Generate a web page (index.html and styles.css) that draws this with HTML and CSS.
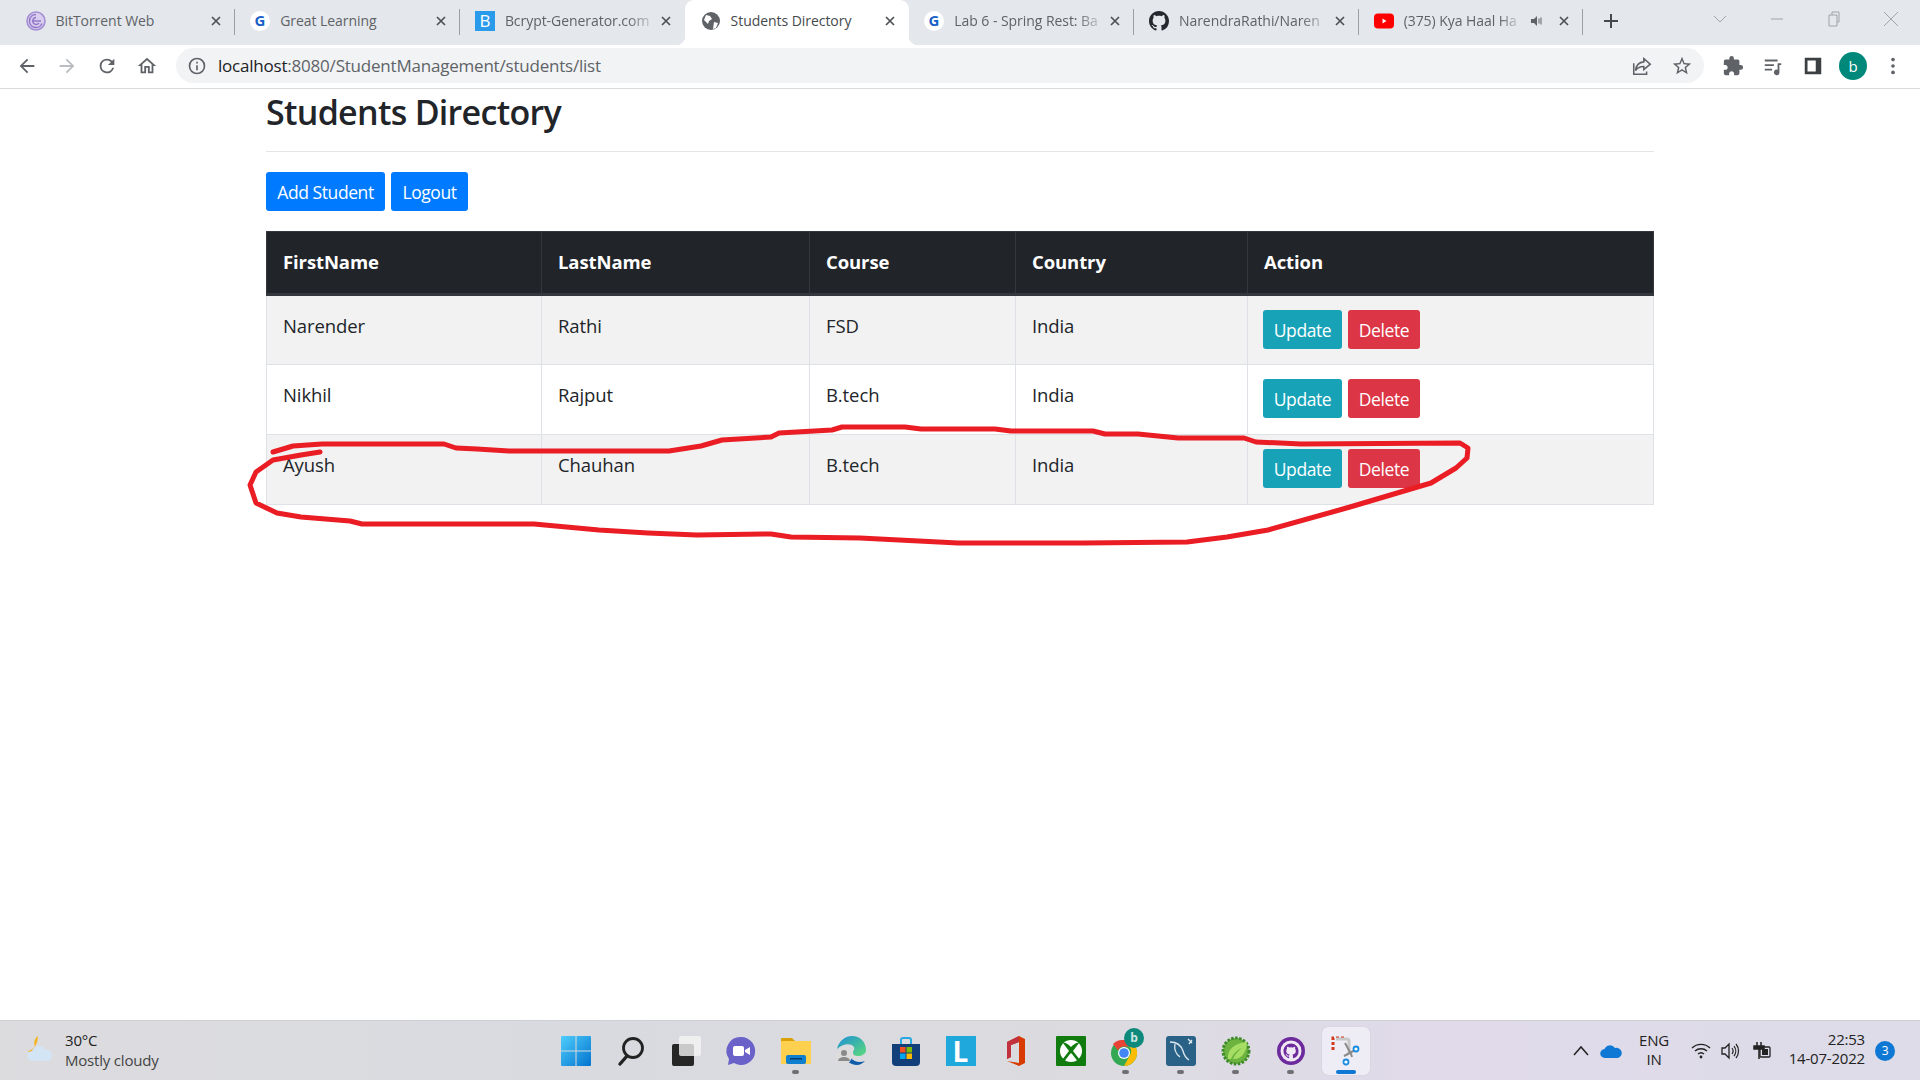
FILE: index.html
```html
<!DOCTYPE html>
<html lang="en">
<head>
<meta charset="utf-8">
<title>Students Directory</title>
<link rel="stylesheet" href="styles.css">
</head>
<body>
<div class="tabstrip">
  <div class="tab sep">
    <svg class="fav" viewBox="0 0 20 20"><circle cx="10" cy="10" r="9" fill="#d9cdf0" stroke="#a58fd4" stroke-width="1.6"/><path d="M10 3.5a6.5 6.5 0 1 0 6 9M10 6.5a3.5 3.5 0 1 0 3 5.5" fill="none" stroke="#9478c8" stroke-width="1.5"/><path d="M7 10h8" stroke="#9478c8" stroke-width="1.5"/></svg>
    <span class="title">BitTorrent Web</span>
    <svg class="close" viewBox="0 0 16 16"><path d="M4 4l8 8M12 4l-8 8"/></svg>
  </div>
  <div class="tab sep">
    <svg class="fav" viewBox="0 0 20 20"><circle cx="10" cy="10" r="10" fill="#fff"/><text x="10" y="15" class="fav-g">G</text></svg>
    <span class="title">Great Learning</span>
    <svg class="close" viewBox="0 0 16 16"><path d="M4 4l8 8M12 4l-8 8"/></svg>
  </div>
  <div class="tab">
    <svg class="fav" viewBox="0 0 20 20"><rect width="20" height="20" fill="#2a9bea"/><text x="10" y="16" class="fav-b">B</text></svg>
    <span class="title fade">Bcrypt-Generator.com</span>
    <svg class="close" viewBox="0 0 16 16"><path d="M4 4l8 8M12 4l-8 8"/></svg>
  </div>
  <div class="tab active">
    <svg class="fav" viewBox="0 0 20 20"><circle cx="10" cy="10" r="9" fill="#5f6368"/><path d="M5 4l4 1 2 3-3 2-1 3-4-4zM13 11l4 1-2 5-3 1z" fill="#fff"/></svg>
    <span class="title">Students Directory</span>
    <svg class="close" viewBox="0 0 16 16"><path d="M4 4l8 8M12 4l-8 8"/></svg>
  </div>
  <div class="tab sep">
    <svg class="fav" viewBox="0 0 20 20"><circle cx="10" cy="10" r="10" fill="#fff"/><text x="10" y="15" class="fav-g">G</text></svg>
    <span class="title fade">Lab 6 - Spring Rest: Ba</span>
    <svg class="close" viewBox="0 0 16 16"><path d="M4 4l8 8M12 4l-8 8"/></svg>
  </div>
  <div class="tab sep">
    <svg class="fav" viewBox="0 0 16 16"><path fill="#24292f" d="M8 0C3.58 0 0 3.58 0 8c0 3.54 2.29 6.53 5.47 7.59.4.07.55-.17.55-.38 0-.19-.01-.82-.01-1.49-2.01.37-2.53-.49-2.69-.94-.09-.23-.48-.94-.82-1.13-.28-.15-.68-.52-.01-.53.63-.01 1.08.58 1.23.82.72 1.21 1.87.87 2.33.66.07-.52.28-.87.51-1.07-1.78-.2-3.64-.89-3.64-3.95 0-.87.31-1.59.82-2.15-.08-.2-.36-1.02.08-2.12 0 0 .67-.21 2.2.82.64-.18 1.32-.27 2-.27.68 0 1.36.09 2 .27 1.53-1.04 2.2-.82 2.2-.82.44 1.1.16 1.92.08 2.12.51.56.82 1.27.82 2.15 0 3.07-1.87 3.75-3.65 3.95.29.25.54.73.54 1.48 0 1.07-.01 1.93-.01 2.2 0 .21.15.46.55.38A8.013 8.013 0 0 0 16 8c0-4.42-3.58-8-8-8z"/></svg>
    <span class="title fade">NarendraRathi/Naren</span>
    <svg class="close" viewBox="0 0 16 16"><path d="M4 4l8 8M12 4l-8 8"/></svg>
  </div>
  <div class="tab sep">
    <svg class="fav" viewBox="0 0 20 20"><rect y="2.5" width="20" height="15" rx="4" fill="#f00"/><path d="M8.5 7.5v5l4-2.5z" fill="#fff"/></svg>
    <span class="title fade">(375) Kya Haal Ha</span>
    <svg class="speaker" viewBox="0 0 16 16"><path d="M2 6h3l3-3v10l-3-3H2z" fill="#5f6368"/><path d="M10 5.5v5M12 4.500v7" stroke="#5f6368" fill="none"/></svg>
    <svg class="close" viewBox="0 0 16 16"><path d="M4 4l8 8M12 4l-8 8"/></svg>
  </div>
  <svg class="newtab" viewBox="0 0 16 16"><path d="M8 1v14M1 8h14"/></svg>
  <div class="winctl">
    <svg class="chev" viewBox="0 0 16 16"><path d="M2 5l6 6 6-6"/></svg>
    <svg class="wbtn" viewBox="0 0 16 16"><path d="M2 8h12"/></svg>
    <svg class="wbtn" viewBox="0 0 16 16"><path d="M3 4h8v11H3zM6 4V1h7v10h-2"/></svg>
    <svg class="wbtn" viewBox="0 0 16 16"><path d="M1 1l14 14M15 1L1 15"/></svg>
  </div>
</div>

<div class="toolbar">
  <div class="nav"><svg class="ic" viewBox="0 0 24 24"><path d="M20 11H7.830l5.590-5.590L12 4l-8 8 8 8 1.410-1.410L7.830 13H20v-2z"/></svg></div>
  <div class="nav"><svg class="ic dim" viewBox="0 0 24 24"><path d="M4 11h12.170l-5.590-5.590L12 4l8 8-8 8-1.410-1.410L16.170 13H4v-2z"/></svg></div>
  <div class="nav"><svg class="ic" viewBox="0 0 24 24"><path d="M17.650 6.350A7.960 7.960 0 0 0 12 4a8 8 0 1 0 7.730 10h-2.080A6 6 0 1 1 12 6c1.660 0 3.140.690 4.220 1.780L13 11h7V4l-2.350 2.350z"/></svg></div>
  <div class="nav"><svg class="ic" viewBox="0 0 24 24"><path d="M12 5.690l5 4.500V18h-2v-6H9v6H7v-7.810l5-4.500M12 3L2 12h3v8h6v-6h2v6h6v-8h3L12 3z"/></svg></div>
  <div class="omni">
    <svg class="ic small" viewBox="0 0 24 24"><path d="M11 7h2v2h-2zm0 4h2v6h-2zm1-9a10 10 0 1 0 0 20 10 10 0 0 0 0-20zm0 18a8 8 0 1 1 0-16 8 8 0 0 1 0 16z"/></svg>
    <span class="url">localhost<span class="url-rest">:8080/StudentManagement/students/list</span></span>
    <svg class="ic omni-share" viewBox="0 0 24 24"><path d="M14 4l7 6-7 6v-3.500c-4 0-7 1-9 4.500 .5-5 3-9 9-9.500zM3 9v12h14v-3" fill="none" stroke="#5f6368" stroke-width="1.700"/></svg>
    <svg class="ic omni-star" viewBox="0 0 24 24"><path d="M22 9.240l-7.190-.620L12 2 9.190 8.630 2 9.240l5.460 4.730L5.820 21 12 17.270 18.180 21l-1.630-7.030L22 9.240zM12 15.400l-3.760 2.270 1-4.280-3.320-2.880 4.380-.380L12 6.100l1.710 4.040 4.380.380-3.320 2.880 1 4.280L12 15.400z"/></svg>
  </div>
  <div class="exts">
    <div class="nav"><svg class="ic" viewBox="0 0 24 24"><path d="M20.500 11H19V7c0-1.100-.900-2-2-2h-4V3.500a2.500 2.500 0 0 0-5 0V5H4c-1.100 0-1.990.900-1.990 2v3.800H3.500c1.490 0 2.700 1.210 2.700 2.700s-1.210 2.700-2.700 2.700H2V20c0 1.100.900 2 2 2h3.800v-1.500c0-1.490 1.210-2.700 2.700-2.700 1.490 0 2.700 1.210 2.700 2.700V22H17c1.100 0 2-.900 2-2v-4h1.500a2.500 2.500 0 0 0 0-5z"/></svg></div>
    <div class="nav"><svg class="ic" viewBox="0 0 24 24"><path d="M3 5h14v2H3zM3 10h10v2H3zM3 15h8v2H3zM17 9h4v2h-2v8a3 3 0 1 1-2-2.800z"/></svg></div>
    <div class="nav"><svg class="ic panel" viewBox="0 0 24 24"><path fill-rule="evenodd" d="M3 3h18v18H3zM6 6v12h9V6z"/></svg></div>
    <div class="nav"><span class="avatar">b</span></div>
    <div class="nav"><svg class="ic" viewBox="0 0 24 24"><circle cx="12" cy="5" r="2"/><circle cx="12" cy="12" r="2"/><circle cx="12" cy="19" r="2"/></svg></div>
  </div>
</div>

<main class="page">
  <h1 class="heading">Students Directory</h1>
  <hr class="rule">
  <div class="actions">
    <a class="btn btn-add">Add Student</a>
    <a class="btn btn-logout">Logout</a>
  </div>
  <table class="students">
    <thead>
      <tr>
        <th class="c1">FirstName</th>
        <th class="c2">LastName</th>
        <th class="c3">Course</th>
        <th class="c4">Country</th>
        <th class="c5">Action</th>
      </tr>
    </thead>
    <tbody>
      <tr class="odd">
        <td>Narender</td><td>Rathi</td><td>FSD</td><td>India</td>
        <td class="cell-actions"><div class="row-actions"><a class="btn btn-update">Update</a><a class="btn btn-delete">Delete</a></div></td>
      </tr>
      <tr>
        <td>Nikhil</td><td>Rajput</td><td>B.tech</td><td>India</td>
        <td class="cell-actions"><div class="row-actions"><a class="btn btn-update">Update</a><a class="btn btn-delete">Delete</a></div></td>
      </tr>
      <tr class="odd">
        <td>Ayush</td><td>Chauhan</td><td>B.tech</td><td>India</td>
        <td class="cell-actions"><div class="row-actions"><a class="btn btn-update">Update</a><a class="btn btn-delete">Delete</a></div></td>
      </tr>
    </tbody>
  </table>
</main>

<svg class="scribble" viewBox="0 0 1920 1080" aria-hidden="true"><path d="M273 452L293 446 322 444 444 444 456 448 477 449 509 451 669 451 701 446 722 440 771 437 779 433 832 430 842 427 905 427 921 429 995 429 1011 431 1093 431 1105 434 1138 434 1178 438 1244 438 1256 442 1301 444 1460 443 1468 448 1467 458 1456 468 1431 483 1350 507 1268 530 1227 537 1187 542 1084 543 958 543 860 538 791 537 771 534 697 535 648 533 599 530 534 524 362 524 350 521 301 517 277 513 256 503 250 485 256 472 273 460 301 455 320 452"/></svg>

<footer class="taskbar">
  <div class="weather">
    <svg class="wx" viewBox="0 0 32 32"><path d="M14 2a9 9 0 0 0 3 16 9 9 0 0 1-13-1c5-1 10-6 10-15z" fill="#f5b324"/><path d="M9 27a5 5 0 0 1-1-10 7 7 0 0 1 13-1 5.500 5.500 0 0 1 3 11z" fill="#d3e4f5"/></svg>
    <div class="wx-text"><span>30°C</span><span class="wx-sub">Mostly cloudy</span></div>
  </div>
  <div class="apps">
    <div class="app"><svg class="ai" viewBox="0 0 30 30"><defs><linearGradient id="win" x1="0" y1="0" x2="1" y2="1"><stop offset="0" stop-color="#4fcdfb"/><stop offset="1" stop-color="#0273cf"/></linearGradient></defs><path fill="url(#win)" d="M0 1a1 1 0 0 1 1-1h13.500v14.500H0zM15.500 0H29a1 1 0 0 1 1 1v13.500H15.500zM0 15.500h14.500V30H1a1 1 0 0 1-1-1zM15.500 15.500H30V29a1 1 0 0 1-1 1H15.500z"/></svg></div>
    <div class="app"><svg class="ai" viewBox="0 0 30 30"><circle cx="17" cy="12" r="9.500" fill="none" stroke="#222" stroke-width="2.800"/><path d="M11 20l-7 8" stroke="#222" stroke-width="3.400" stroke-linecap="round"/></svg></div>
    <div class="app"><svg class="ai" viewBox="0 0 30 30"><rect x="1" y="8" width="22" height="22" rx="2" fill="#262626"/><rect x="8" y="0" width="22" height="20" rx="2" fill="#f4f4f4" opacity=".8"/></svg></div>
    <div class="app"><svg class="ai" viewBox="0 0 30 30"><path d="M15 1a14 14 0 1 1-7 26l-6 2 1-6A14 14 0 0 1 15 1z" fill="#6a62c8"/><rect x="7" y="10" width="11" height="10" rx="2" fill="#fff"/><path d="M19 14l5-3v8l-5-3z" fill="#fff"/></svg></div>
    <div class="app with-dot"><svg class="ai" viewBox="0 0 30 30"><path d="M0 3a1 1 0 0 1 1-1h10l3 3v6H0z" fill="#d9a007"/><rect y="5" width="30" height="23" rx="1" fill="#fdd04f"/><rect x="5" y="19" width="20" height="9" rx="2" fill="#0f7fd0"/><rect x="9" y="22" width="12" height="1.500" fill="#053c6e"/></svg></div>
    <div class="app"><svg class="ai" viewBox="0 0 30 30"><defs><linearGradient id="edge" x1="0" y1="0" x2="1" y2="1"><stop offset="0" stop-color="#1b8fd6"/><stop offset="1" stop-color="#5ddb7c"/></linearGradient></defs><path d="M1 13C3 4 10 0 16 0c8 0 14 6 14 14 0 4-4 6-8 6-3 0-5-1-5-3 0-3 2-3 1-6-2-3-9-5-17 2z" fill="url(#edge)"/><path d="M8 16c0 8 6 13 13 13 3 0 6-2 8-4-5 2-11 1-14-3-2-3-3-5-7-6z" fill="#0f5da8"/><circle cx="8" cy="20" r="8" fill="#dcdcdc"/><circle cx="8" cy="17" r="3" fill="#8a8a8a"/><path d="M2 25a6 4 0 0 1 12 0z" fill="#8a8a8a"/></svg></div>
    <div class="app"><svg class="ai" viewBox="0 0 30 30"><path d="M10 8V4a2 2 0 0 1 2-2h6a2 2 0 0 1 2 2v4" fill="none" stroke="#29a8e0" stroke-width="2"/><path d="M1 8h28v18a4 4 0 0 1-4 4H5a4 4 0 0 1-4-4z" fill="#123f7a"/><rect x="9" y="11" width="5.500" height="5.500" fill="#f25022"/><rect x="15.500" y="11" width="5.500" height="5.500" fill="#7fba00"/><rect x="9" y="17.500" width="5.500" height="5.500" fill="#00a4ef"/><rect x="15.500" y="17.500" width="5.500" height="5.500" fill="#ffb900"/></svg></div>
    <div class="app"><span class="tile-l">L</span></div>
    <div class="app"><svg class="ai" viewBox="0 0 30 30"><path d="M6 6l12-6 6 3v24l-6 3-12-5 12 2V6l-8 3v12l-4 2z" fill="#d83b01"/><path d="M6 6l12-6v6l-8 3v12l-4 2z" fill="#c1323e"/></svg></div>
    <div class="app"><svg class="ai" viewBox="0 0 30 30"><rect width="30" height="30" rx="1" fill="#107c10"/><circle cx="15" cy="15" r="11" fill="#fff"/><path d="M15 11c-3-3-6-5-8-4l6 8-7 9 2 2c2-3 5-7 7-9 2 2 5 6 7 9l2-2-7-9 6-8c-2-1-5 1-8 4z" fill="#107c10"/></svg></div>
    <div class="app with-dot"><svg class="ai chrome" viewBox="0 0 30 30"><circle cx="13" cy="17" r="13" fill="#34a853"/><path d="M13 4a13 13 0 0 1 11.300 6.500H13a6.500 6.500 0 0 0-6 4L2 8a13 13 0 0 1 11-4z" fill="#ea4335"/><path d="M24.300 10.500A13 13 0 0 1 13 30l6-11a6.500 6.500 0 0 0-1-8.500z" fill="#fbbc05"/><circle cx="13" cy="17" r="6" fill="#fff"/><circle cx="13" cy="17" r="4.800" fill="#4285f4"/></svg><span class="chrome-b">b</span></div>
    <div class="app with-dot"><svg class="ai" viewBox="0 0 30 30"><rect width="30" height="30" rx="3" fill="#2a6187"/><path d="M4 6c6 0 11 3 13 9 1 4 3 7 6 9M9 8c-1 5 1 10 5 13M22 3l4 4M23 8l3-4" fill="none" stroke="#dfe8ee" stroke-width="1.300"/></svg></div>
    <div class="app with-dot"><svg class="ai" viewBox="0 0 30 30"><circle cx="15" cy="15" r="13" fill="#6db33f" stroke="#3d8a2a" stroke-width="3" stroke-dasharray="2.500 1.500"/><path d="M7 23C6 13 14 7 26 6c0 10-6 18-14 17 2-5 6-9 9-11-5 2-9 6-11 11z" fill="#a5de62"/></svg></div>
    <div class="app with-dot"><svg class="ai" viewBox="0 0 30 30"><circle cx="15" cy="15" r="14" fill="#6d2a9d"/><circle cx="15" cy="15" r="10.500" fill="#f0e8f5"/><g transform="translate(7.500 7.500) scale(.94)"><path fill="#6d2a9d" d="M8 0C3.580 0 0 3.580 0 8c0 3.540 2.290 6.530 5.470 7.590.4.070.550-.170.550-.380v-1.370c-2.010.370-2.530-.490-2.690-.940-.090-.230-.480-.940-.820-1.130-.280-.150-.680-.520-.010-.530.630-.010 1.080.580 1.230.820.720 1.210 1.870.870 2.330.660.070-.520.280-.870.510-1.070-1.780-.200-3.640-.890-3.640-3.950 0-.870.310-1.590.820-2.150-.080-.200-.360-1.020.080-2.120 0 0 .670-.210 2.200.820a7.500 7.500 0 0 1 4 0c1.530-1.040 2.200-.820 2.200-.820.440 1.100.160 1.920.080 2.120.510.560.820 1.270.820 2.150 0 3.070-1.870 3.750-3.650 3.950.290.250.540.730.540 1.480v2.200c0 .210.150.460.550.380A8.013 8.013 0 0 0 16 8c0-4.420-3.580-8-8-8z"/></g></svg></div>
    <div class="app current"><svg class="ai" viewBox="0 0 30 30"><path d="M2 14V2h12" fill="none" stroke="#d13a1a" stroke-width="3" stroke-dasharray="3 2"/><path d="M5 3h11a2 2 0 0 1 2 2v12" fill="none" stroke="#c8c8c8" stroke-width="3"/><path d="M14 7l6 11 1 3M26 13l-11 6-2 1" fill="none" stroke="#8a8a8a" stroke-width="2"/><circle cx="25" cy="13" r="2.500" fill="#fff" stroke="#1a8de0" stroke-width="1.800"/><circle cx="15" cy="26" r="2.500" fill="#fff" stroke="#1a8de0" stroke-width="1.800"/></svg></div>
  </div>
  <div class="tray">
    <svg class="t-chev" viewBox="0 0 18 18"><path d="M2 13l7-8 7 8"/></svg>
    <svg class="t-cloud" viewBox="0 0 22 16"><path d="M5 15a4.500 4.500 0 0 1-.5-9A6 6 0 0 1 15 5a5 5 0 0 1 3 10z" fill="#0f78d4"/></svg>
    <div class="t-lang"><span>ENG</span><span>IN</span></div>
    <svg class="t-ic t-wifi" viewBox="0 0 20 20"><path d="M1 7a13 13 0 0 1 18 0M4 10a9 9 0 0 1 12 0M7 13a4.500 4.500 0 0 1 6 0" fill="none" stroke="#222" stroke-width="1.400"/><circle cx="10" cy="16" r="1.400" fill="#222"/></svg>
    <svg class="t-ic t-vol" viewBox="0 0 20 20"><path d="M2 7h3l4-4v14l-4-4H2z" fill="none" stroke="#222" stroke-width="1.300"/><path d="M12 7a5 5 0 0 1 0 6M14 5a8 8 0 0 1 0 10M16 3a11 11 0 0 1 0 14" fill="none" stroke="#222" stroke-width="1.200"/></svg>
    <svg class="t-ic t-bat" viewBox="0 0 20 20"><path d="M6 1v4M10 1v4M3 5h10v3H3zM8 8v10" stroke="#222" stroke-width="1.500" fill="#222"/><rect x="9" y="6" width="10" height="10" rx="1" fill="none" stroke="#222" stroke-width="1.300"/><rect x="11" y="8" width="6" height="6" fill="#222"/></svg>
    <div class="t-clock"><span>22:53</span><span>14-07-2022</span></div>
    <span class="t-badge">3</span>
  </div>
</footer>
</body>
</html>
```
FILE: styles.css
```css
* { box-sizing: border-box; }
html, body { margin: 0; height: 100%; }
body {
  display: flex;
  flex-direction: column;
  height: 100vh;
  overflow: hidden;
  position: relative;
  background: #fff;
  color: #212529;
  font-family: "Open Sans", "Noto Sans", sans-serif;
}

/* tab strip */
.tabstrip {
  flex: none;
  height: 45px;
  display: flex;
  padding-left: 10.500px;
  background: #e4e7eb;
}
.tab {
  position: relative;
  flex: none;
  width: 224.700px;
  display: flex;
  align-items: center;
  padding: 0 11px 4px 15px;
  font-size: 14px;
  letter-spacing: -0.05px;
  color: #5f6368;
}
.tab.sep::after {
  content: "";
  position: absolute;
  right: 0;
  top: 9px;
  height: 26px;
  width: 1px;
  background: #9aa0a6;
}
.tab.active {
  padding-left: 16px;
  background: #fff;
  border-radius: 9px 9px 0 0;
  color: #45494d;
}
.tab.active::before, .tab.active::after {
  content: "";
  position: absolute;
  bottom: 0;
  width: 9px;
  height: 9px;
}
.tab.active::before {
  left: -9px;
  background: radial-gradient(circle at 0 0, transparent 9px, #fff 9.500px);
}
.tab.active::after {
  right: -9px;
  background: radial-gradient(circle at 100% 0, transparent 9px, #fff 9.500px);
}
.fav { flex: none; width: 20px; height: 20px; }
.fav-g { font: 700 15px "Open Sans", sans-serif; fill: #1a5fc8; text-anchor: middle; }
.fav-b { font: 400 17px "Open Sans", sans-serif; fill: #fff; text-anchor: middle; }
.title {
  flex: 1;
  min-width: 0;
  margin-left: 10px;
  white-space: nowrap;
}
.title.fade {
  -webkit-mask-image: linear-gradient(to right, #000 80%, transparent);
  mask-image: linear-gradient(to right, #000 80%, transparent);
}
.close {
  flex: none;
  width: 16px;
  height: 16px;
  fill: none;
  stroke: #4d5156;
  stroke-width: 1.700;
}
.speaker { flex: none; width: 16px; height: 16px; margin-left: 6px; margin-right: 11px; }
.newtab {
  flex: none;
  width: 16px;
  height: 16px;
  margin: 13px 0 0 20px;
  fill: none;
  stroke: #45494d;
  stroke-width: 2;
}
.winctl {
  display: flex;
  align-items: flex-start;
  margin-left: auto;
  padding-right: 21px;
  padding-top: 11px;
}
.chev, .wbtn {
  width: 16px;
  height: 16px;
  fill: none;
  stroke: #a0a4a9;
  stroke-width: 1;
}
.wbtn { margin-left: 41px; }

/* toolbar */
.toolbar {
  flex: none;
  height: 44px;
  display: flex;
  align-items: center;
  padding: 0 7px 2px;
  background: #fff;
  border-bottom: 1px solid #d9dadc;
}
.nav {
  flex: none;
  width: 40px;
  height: 36px;
  display: flex;
  align-items: center;
  justify-content: center;
}
.ic { width: 22px; height: 22px; fill: #5f6368; }
.ic.dim { fill: #b9bcc0; }
.ic.small { width: 20px; height: 20px; flex: none; }
.ic.panel { fill: #3c4043; }
.omni {
  flex: 1;
  min-width: 0;
  height: 35px;
  margin: 0 9px;
  padding: 0 11px;
  display: flex;
  align-items: center;
  border-radius: 18px;
  background: #f1f3f4;
}
.url {
  margin-left: 11px;
  font-size: 17px;
  letter-spacing: -0.21px;
  color: #202124;
}
.url-rest { color: #5f6368; }
.omni-share { margin-left: auto; flex: none; }
.omni-star { margin-left: 18px; flex: none; }
.exts { display: flex; flex: none; }
.avatar {
  width: 28px;
  height: 28px;
  display: flex;
  align-items: center;
  justify-content: center;
  border-radius: 50%;
  background: #00897b;
  color: #fff;
  font-size: 15px;
}

/* page */
.page {
  flex: 1;
  min-height: 0;
  padding: 0 266px;
}
.heading {
  margin: 0 0 16px;
  font-size: 34px;
  line-height: 46px;
  font-weight: 600;
  letter-spacing: -0.7px;
}
.rule {
  height: 1px;
  margin: 0 0 20px;
  border: 0;
  background: #e4e5e7;
}
.actions { display: flex; gap: 6px; margin-bottom: 20px; }
.btn {
  display: flex;
  align-items: center;
  justify-content: center;
  height: 39px;
  border-radius: 3px;
  color: #fff;
  font-size: 17.500px;
  letter-spacing: -0.42px;
}
.btn-add { width: 119px; background: #007bff; }
.btn-logout { width: 77px; background: #007bff; }
.btn-update { width: 79px; background: #17a2b8; }
.btn-delete { width: 72px; background: #dc3545; }
.row-actions { display: flex; gap: 6px; }

.students {
  width: 1387px;
  table-layout: fixed;
  border-collapse: collapse;
  font-size: 18.500px;
  letter-spacing: -0.1px;
}
.students th, .students td {
  text-align: left;
  vertical-align: top;
}
.students th {
  height: 63px;
  padding: 17px 16px 0;
  background: #212529;
  color: #fff;
  font-weight: 700;
  border: 1px solid #32383e;
  border-bottom-width: 3px;
}
.students td {
  height: 70px;
  padding: 15px 16px 0;
  line-height: 30px;
  border: 1px solid #dee2e6;
}
.students td.cell-actions { padding: 14px 15px 0; }
.odd td { background: #f2f2f2; }
.c1 { width: 275px; }
.c2 { width: 268px; }
.c3 { width: 206px; }
.c4 { width: 232px; }
.c5 { width: 406px; }

.scribble {
  position: absolute;
  left: 0;
  top: 0;
  width: 1920px;
  height: 1080px;
  pointer-events: none;
  fill: none;
  stroke: #ea1c24;
  stroke-width: 5;
  stroke-linejoin: round;
  stroke-linecap: round;
}

/* taskbar */
.taskbar {
  flex: none;
  height: 60px;
  display: flex;
  align-items: center;
  background: linear-gradient(90deg, #dcdcdf 0%, #d9dae0 30%, #dbdbdf 55%, #e0daea 75%, #dddce8 100%);
  border-top: 1px solid #cfd0d3;
  color: #222;
}
.weather {
  flex: none;
  width: 548px;
  display: flex;
  align-items: center;
  padding: 0 0 1px 24px;
}
.wx { width: 32px; height: 32px; flex: none; }
.wx-text {
  display: flex;
  flex-direction: column;
  margin-left: 9px;
  font-size: 15px;
  line-height: 20px;
  letter-spacing: -0.2px;
}
.wx-sub { color: #444; }
.apps { flex: none; display: flex; }
.app {
  position: relative;
  flex: none;
  width: 55px;
  height: 48px;
  display: flex;
  align-items: center;
  justify-content: center;
}
.ai { width: 30px; height: 30px; overflow: visible; }
.with-dot::after {
  content: "";
  position: absolute;
  left: 24px;
  bottom: 1px;
  width: 7px;
  height: 4px;
  border-radius: 2px;
  background: #6f7074;
}
.current {
  width: 48px;
  margin-left: 3.500px;
  border-radius: 6px;
  background: #eeedf5;
  box-shadow: 0 0 1px #bbb;
}
.current::after {
  content: "";
  position: absolute;
  left: 14px;
  bottom: 1px;
  width: 20px;
  height: 4px;
  border-radius: 2px;
  background: #0f78d4;
}
.tile-l {
  width: 30px;
  height: 30px;
  display: block;
  background: #1fa8dc;
  color: #fff;
  font-size: 28px;
  font-weight: 700;
  line-height: 30px;
  text-align: center;
}
.chrome-b {
  position: absolute;
  left: 26px;
  top: 1px;
  width: 20px;
  height: 20px;
  border-radius: 50%;
  background: #0e8a7d;
  color: #cfe8e4;
  font-size: 12px;
  font-weight: 700;
  line-height: 19px;
  text-align: center;
}
.tray {
  flex: 1;
  display: flex;
  align-items: center;
  justify-content: flex-end;
  padding-right: 25px;
  font-size: 15px;
  letter-spacing: -0.2px;
}
.t-chev { width: 18px; height: 18px; fill: none; stroke: #222; stroke-width: 1.500; flex: none; }
.t-cloud { width: 22px; height: 16px; margin-left: 10px; flex: none; }
.t-lang {
  width: 40px;
  margin: 0 0 2px 12px;
  display: flex;
  flex-direction: column;
  align-items: center;
  line-height: 19px;
}
.t-ic { width: 20px; height: 20px; flex: none; }
.t-wifi { margin-left: 17px; }
.t-vol { margin-left: 9px; }
.t-bat { margin-left: 11px; }
.t-clock {
  width: 84px;
  margin: 0 0 3px 10px;
  display: flex;
  flex-direction: column;
  align-items: flex-end;
  line-height: 19px;
}
.t-badge {
  width: 20px;
  height: 20px;
  margin-left: 10px;
  border-radius: 50%;
  background: #0f78d4;
  color: #fff;
  font-size: 12px;
  line-height: 20px;
  text-align: center;
  flex: none;
}
```
